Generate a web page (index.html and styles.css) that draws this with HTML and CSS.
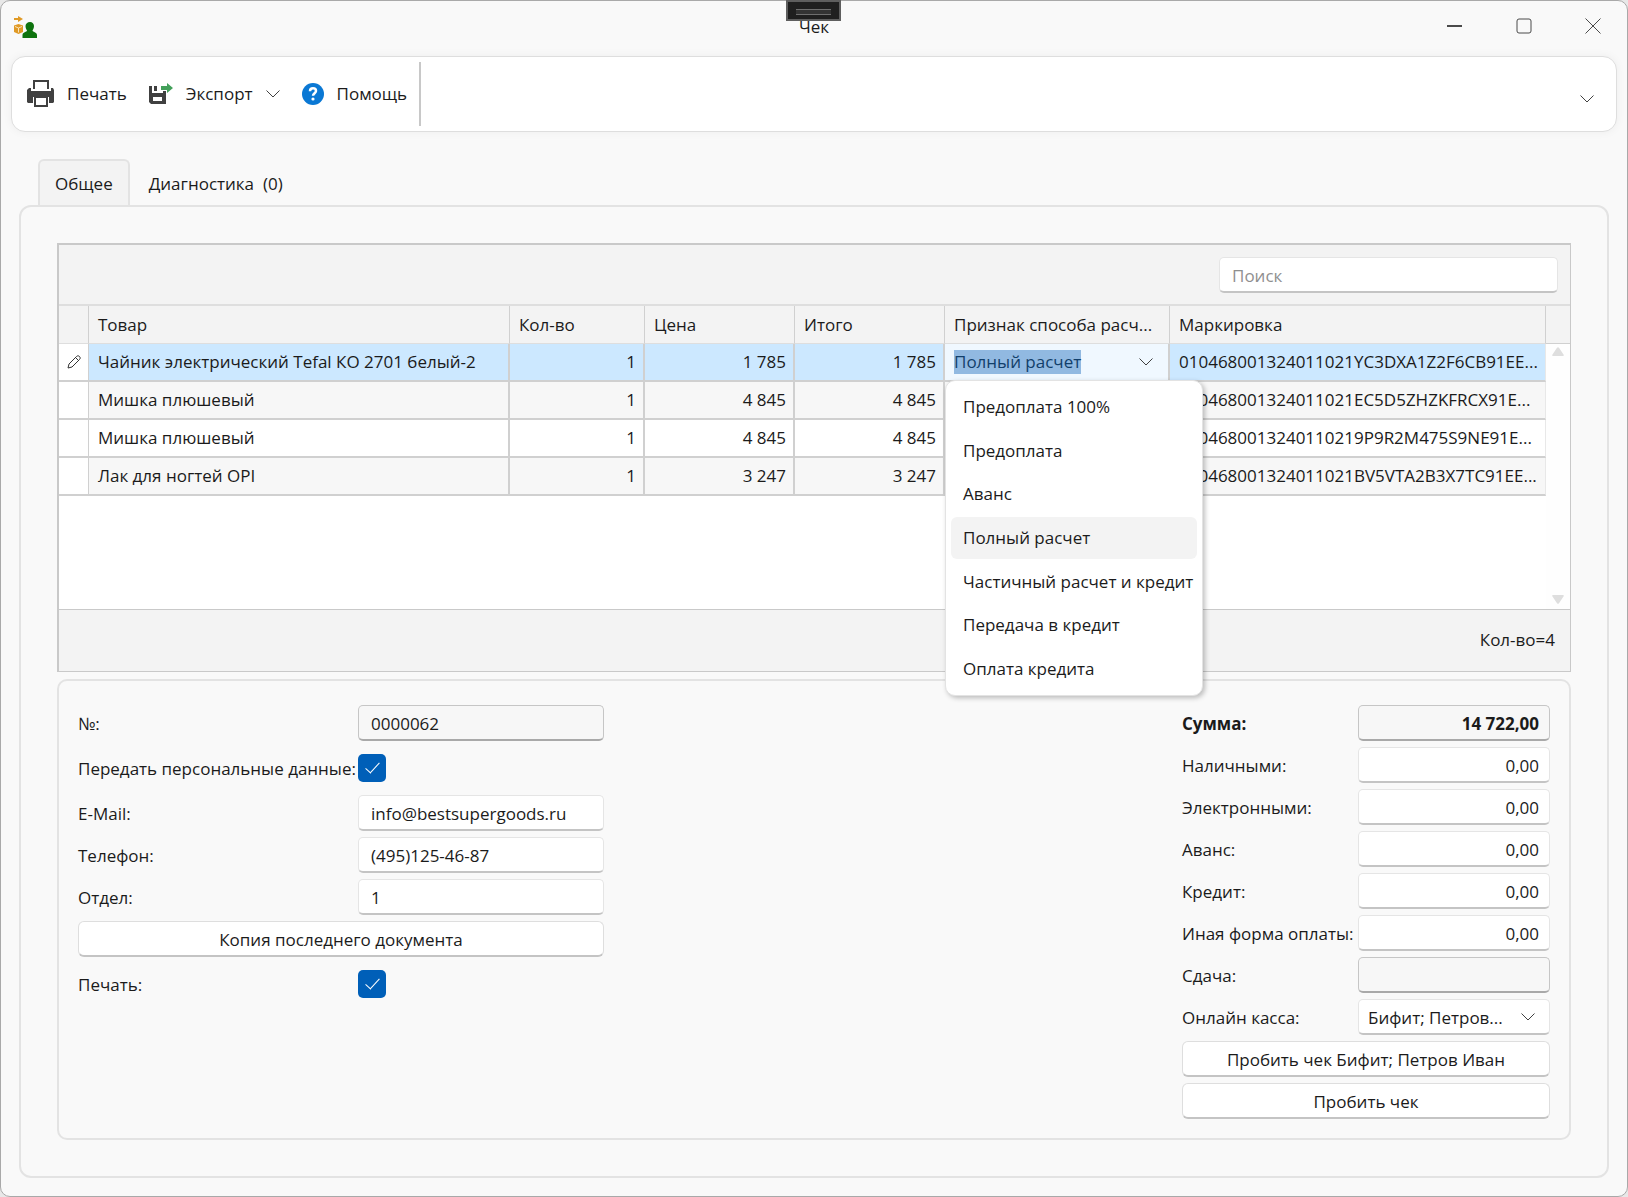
FILE: index.html
```
<!DOCTYPE html>
<html lang="ru">
<head>
    <meta charset="UTF-8">
    <meta name="viewport" content="width=device-width, initial-scale=1.0">
    <title>Чек</title>
    <link rel="stylesheet" href="styles.css">
</head>
<body>
    <div class="window">
        <header class="titlebar">
            <svg class="app-icon" width="24" height="24" viewBox="0 0 24 24">
                <path d="M1 2h4V0l5 3-5 3V4H1z" fill="#e09a26"/>
                <path d="M5.500 8l4.500 1.500v6.500l-4.500 2L1 16V9.500z" fill="#e09a26"/>
                <path d="M2 10.500l3.500 1.500 3.500-1.500M5.500 12v4.500" fill="none" stroke="#fbe3b8"/>
                <path d="M17 6c2.500 0 4 1.800 4 4 0 2-1 3.500-1.500 4.500 0 1.500 4.500 1.500 4.500 4.500v3H9.500v-3c0-3 4.500-3 4.500-4.500-.500-1-1.500-2.500-1.500-4.500 0-2.200 2-4 4.500-4z" fill="#0e730e"/>
            </svg>
            <h1>Чек</h1>
            <div class="drag-handle"></div>
            <div class="window-buttons">
                <button type="button" aria-label="Свернуть">
                    <svg width="16" height="16" viewBox="0 0 16 16"><path d="M0 8h15" stroke-width="2"/></svg>
                </button>
                <button type="button" aria-label="Развернуть">
                    <svg width="16" height="16" viewBox="0 0 16 16"><rect x="1" y="1" width="14" height="14" rx="2"/></svg>
                </button>
                <button type="button" aria-label="Закрыть">
                    <svg width="16" height="16" viewBox="0 0 16 16"><path d="M.500.500l15 15M15.500.500l-15 15"/></svg>
                </button>
            </div>
        </header>

        <nav class="toolbar">
            <button type="button" class="tool">
                <svg width="28" height="28" viewBox="0 0 28 28">
                    <path d="M8 9V1h14v8" fill="#fff" stroke="#404040" stroke-width="2"/>
                    <path d="M1 10l2-2h2v3h20V8h2l1 2v12l-1 1h-4v-6H7v6H2l-1-1z" fill="#404040"/>
                    <path d="M5 12h20v4H5z" fill="#404040"/>
                    <path d="M9 17h12v9H9z" fill="#fff" stroke="#404040" stroke-width="2"/>
                </svg>
                Печать
            </button>
            <button type="button" class="tool">
                <svg width="24" height="24" viewBox="0 0 24 24">
                    <path d="M0 4h3v7h11v-2h3v13H2l-2-2z" fill="#404040"/>
                    <path d="M5 4h3v5H5z" fill="#404040"/>
                    <path d="M4 15h9v4H4z" fill="#fff"/>
                    <path d="M12 4h6V1l6 5-6 5V8h-6z" fill="#43a05a"/>
                </svg>
                Экспорт
                <svg class="chevron" width="14" height="8" viewBox="0 0 14 8"><path d="M.500.500L7 7 13.500.500"/></svg>
            </button>
            <button type="button" class="tool">
                <svg width="22" height="22" viewBox="0 0 22 22">
                    <circle cx="11" cy="11" r="11" fill="#0a78d4"/>
                    <path d="M8 8.200C8 6.300 9.300 5.300 11 5.300s3 1.100 3 2.700c0 2.100-3 2.400-3 4.800" fill="none" stroke="#fff" stroke-width="2.500"/>
                    <circle cx="11" cy="16" r="1.600" fill="#fff"/>
                </svg>
                Помощь
            </button>
            <span class="separator"></span>
            <button type="button" class="tool-more" aria-label="Ещё">
                <svg class="chevron" width="14" height="8" viewBox="0 0 14 8"><path d="M.500.500L7 7 13.500.500"/></svg>
            </button>
        </nav>

        <div class="tabs">
            <a href="#common" class="tab active">Общее</a>
            <a href="#diagnostics" class="tab">Диагностика&nbsp; (0)</a>
        </div>

        <main class="panel" id="common">
            <section class="grid">
                <div class="grid-search">
                    <input type="text" class="field" placeholder="Поиск" aria-label="Поиск">
                </div>
                <div class="grid-body">
                    <table>
                        <colgroup>
                            <col class="col-mark">
                            <col>
                            <col class="col-qty">
                            <col class="col-sum">
                            <col class="col-sum">
                            <col class="col-method">
                            <col class="col-code">
                        </colgroup>
                        <thead>
                            <tr>
                                <th></th>
                                <th>Товар</th>
                                <th>Кол-во</th>
                                <th>Цена</th>
                                <th>Итого</th>
                                <th>Признак способа расч...</th>
                                <th>Маркировка</th>
                            </tr>
                        </thead>
                        <tbody>
                            <tr class="selected">
                                <td class="mark">
                                    <svg width="14" height="14" viewBox="0 0 14 14"><path d="M1 13l1-4 7.500-7.500c1-1 2.300-.800 3 0 .800.800 1 2 0 3L5 12zM8.500 2.500l3 3"/></svg>
                                </td>
                                <td>Чайник электрический Tefal КО 2701 белый-2</td>
                                <td class="num">1</td>
                                <td class="num">1 785</td>
                                <td class="num">1 785</td>
                                <td class="edit">
                                    <div class="combo">
                                        <input type="text" id="method" value="Полный расчет" role="combobox" aria-label="Признак способа расчета" aria-expanded="true" aria-controls="method-list">
                                        <svg class="chevron" width="14" height="8" viewBox="0 0 14 8"><path d="M.500.500L7 7 13.500.500"/></svg>
                                        <ul class="dropdown" id="method-list" role="listbox">
                                            <li role="option">Предоплата 100%</li>
                                            <li role="option">Предоплата</li>
                                            <li role="option">Аванс</li>
                                            <li role="option" class="current" aria-selected="true">Полный расчет</li>
                                            <li role="option">Частичный расчет и кредит</li>
                                            <li role="option">Передача в кредит</li>
                                            <li role="option">Оплата кредита</li>
                                        </ul>
                                    </div>
                                </td>
                                <td>010468001324011021YC3DXA1Z2F6CB91EE...</td>
                            </tr>
                            <tr>
                                <td class="mark"></td>
                                <td>Мишка плюшевый</td>
                                <td class="num">1</td>
                                <td class="num">4 845</td>
                                <td class="num">4 845</td>
                                <td></td>
                                <td>010468001324011021EC5D5ZHZKFRCX91E...</td>
                            </tr>
                            <tr>
                                <td class="mark"></td>
                                <td>Мишка плюшевый</td>
                                <td class="num">1</td>
                                <td class="num">4 845</td>
                                <td class="num">4 845</td>
                                <td></td>
                                <td>0104680013240110219P9R2M475S9NE91E...</td>
                            </tr>
                            <tr>
                                <td class="mark"></td>
                                <td>Лак для ногтей OPI</td>
                                <td class="num">1</td>
                                <td class="num">3 247</td>
                                <td class="num">3 247</td>
                                <td></td>
                                <td>010468001324011021BV5VTA2B3X7TC91EE...</td>
                            </tr>
                        </tbody>
                    </table>
                    <div class="scroll">
                        <div class="scroll-head"></div>
                        <svg width="12" height="9" viewBox="0 0 12 9"><path d="M1 9c-1 0-1-1-.500-1.500L5 .800c.500-.800 1.500-.800 2 0l4.500 6.700c.500.500.500 1.500-.500 1.500z"/></svg>
                        <svg class="down" width="12" height="9" viewBox="0 0 12 9"><path d="M1 0c-1 0-1 1-.500 1.500L5 8.200c.500.800 1.500.800 2 0l4.500-6.700c.500-.500.500-1.500-.500-1.500z"/></svg>
                    </div>
                </div>
                <div class="grid-footer">Кол-во=4</div>
            </section>

            <section class="details">
                <form class="form">
                    <label for="number">№:</label>
                    <input type="text" class="field" id="number" value="0000062" readonly>

                    <label for="personal" class="tall">Передать персональные данные:</label>
                    <input type="checkbox" id="personal" checked>

                    <label for="email">E-Mail:</label>
                    <input type="text" class="field" id="email" value="info@bestsupergoods.ru">

                    <label for="phone">Телефон:</label>
                    <input type="text" class="field" id="phone" value="(495)125-46-87">

                    <label for="department">Отдел:</label>
                    <input type="text" class="field" id="department" value="1">

                    <button type="button" class="button">Копия последнего документа</button>

                    <label for="print" class="tall">Печать:</label>
                    <input type="checkbox" id="print" checked>
                </form>

                <form class="form payment">
                    <label for="total" class="bold">Сумма:</label>
                    <input type="text" class="field bold" id="total" value="14 722,00" readonly>

                    <label for="cash">Наличными:</label>
                    <input type="text" class="field" id="cash" value="0,00">

                    <label for="electronic">Электронными:</label>
                    <input type="text" class="field" id="electronic" value="0,00">

                    <label for="advance">Аванс:</label>
                    <input type="text" class="field" id="advance" value="0,00">

                    <label for="credit">Кредит:</label>
                    <input type="text" class="field" id="credit" value="0,00">

                    <label for="other">Иная форма оплаты:</label>
                    <input type="text" class="field" id="other" value="0,00">

                    <label for="change">Сдача:</label>
                    <input type="text" class="field" id="change" readonly>

                    <label for="register">Онлайн касса:</label>
                    <div class="select">
                        <select class="field" id="register">
                            <option>Бифит; Петров...</option>
                        </select>
                        <svg class="chevron" width="14" height="8" viewBox="0 0 14 8"><path d="M.500.500L7 7 13.500.500"/></svg>
                    </div>

                    <button type="button" class="button">Пробить чек Бифит; Петров Иван</button>
                    <button type="button" class="button">Пробить чек</button>
                </form>
            </section>
        </main>
    </div>
    <script>
        // the edited cell opens with its whole value selected
        const method = document.getElementById("method");
        method.focus();
        method.select();
    </script>
</body>
</html>
```
FILE: styles.css
```
*{
    margin: 0;
    padding: 0;
    box-sizing: border-box;
}
body{
    background-color: #e8e8e8;
    color: #1b1b1b;
    font-family: "Open Sans", "Noto Sans", sans-serif;
    font-size: 17px;
    line-height: 24px;
}
button, input, select{
    font: inherit;
    color: inherit;
}
svg{
    flex-shrink: 0;
}
.window{
    min-height: 100vh;
    display: flex;
    flex-direction: column;
    padding-bottom: 18px;
    background-color: #f9f9f9;
    border: 1px solid #a9a9a9;
    border-radius: 10px;
}
.chevron{
    fill: none;
    stroke: #404040;
}

/* title bar */
.titlebar{
    position: relative;
    height: 55px;
    display: flex;
    justify-content: center;
    padding-top: 14px;
}
.titlebar h1{
    font-size: 17px;
    font-weight: normal;
}
.app-icon{
    position: absolute;
    left: 12px;
    top: 15px;
}
.drag-handle{
    position: absolute;
    left: 50%;
    top: -1px;
    width: 55px;
    height: 21px;
    margin-left: -28px;
    padding: 7px 8px;
    background-color: #1f1f1f;
    border: 2px solid #5e5e5e;
}
.drag-handle::before{
    content: "";
    display: block;
    height: 4px;
    border: 1px solid #6e6e6e;
    border-width: 1px 0;
    background-color: #333;
}
.window-buttons{
    position: absolute;
    right: 0;
    top: 0;
    display: flex;
}
.window-buttons button{
    width: 69px;
    height: 50px;
    display: flex;
    align-items: center;
    justify-content: center;
    border: none;
    background: none;
}
.window-buttons svg{
    fill: none;
    stroke: #4a4a4a;
}

/* toolbar */
.toolbar{
    height: 76px;
    margin: 0 10px;
    padding: 0 14px;
    display: flex;
    align-items: center;
    gap: 22px;
    background-color: #fff;
    border: 1px solid #dedede;
    border-radius: 14px;
    box-shadow: 0 0 10px rgba(0, 0, 0, 0.05);
}
.tool{
    display: flex;
    align-items: center;
    gap: 13px;
    border: none;
    background: none;
}
.separator{
    width: 2px;
    height: 64px;
    margin-left: -10px;
    background-color: #c8c8c8;
}
.tool-more{
    margin-left: auto;
    padding: 6px 8px 0;
    border: none;
    background: none;
}

/* tabs */
.tabs{
    display: flex;
    margin: 27px 37px 0;
}
.tab{
    height: 47px;
    padding: 11px 17px 0;
    border: 2px solid transparent;
    border-bottom: none;
    border-radius: 6px 6px 0 0;
    color: inherit;
    text-decoration: none;
}
.tab.active{
    height: 48px;
    margin-bottom: -1px;
    padding: 11px 15px 0;
    border-color: #e3e3e3;
    background-color: #f3f3f3;
}
.panel{
    flex: 1;
    display: flex;
    flex-direction: column;
    margin: -1px 18px 0;
    padding: 36px;
    border: 2px solid #e3e3e3;
    border-radius: 12px;
}

/* goods grid */
.grid{
    flex: 1;
    display: flex;
    flex-direction: column;
    border: 1px solid #c9c9c9;
    border-width: 2px 1px 1px 2px;
    background-color: #f3f3f3;
}
.grid-search{
    display: flex;
    justify-content: flex-end;
    padding: 12px 12px 11px;
}
.grid-search .field{
    width: 339px;
}
.grid-body{
    flex: 1;
    display: flex;
    align-items: flex-start;
    border-top: 2px solid #dedede;
    border-bottom: 1px solid #c9c9c9;
    background-color: #fff;
}
table{
    flex: 1;
    width: 100%;
    table-layout: fixed;
    border-collapse: separate;
    border-spacing: 0;
}
.col-mark{
    width: 30px;
}
.col-qty{
    width: 135px;
}
.col-sum{
    width: 150px;
}
.col-method{
    width: 225px;
}
.col-code{
    width: 376px;
}
th, td{
    height: 38px;
    padding: 0 7px 0 9px;
    text-align: left;
    white-space: nowrap;
    border-right: 2px solid #d0d0d0;
    border-bottom: 2px solid #d0d0d0;
}
th{
    font-weight: normal;
    background-color: #f3f3f3;
    border-right-width: 1px;
    border-bottom: 1px solid #dedede;
}
tbody tr:nth-child(even) td{
    background-color: #f7f7f7;
}
tbody tr.selected td{
    background-color: #cce8ff;
}
td:last-child{
    border-right: 1px solid #e8e8e8;
}
tbody tr td.mark{
    padding: 0;
    background-color: #fff;
    border-right-width: 1px;
}
.mark svg{
    display: block;
    margin: auto;
    fill: none;
    stroke: #333;
}
td.num{
    text-align: right;
}
tbody tr.selected td.edit{
    padding: 0;
    background-color: #f0f8ff;
}
.combo{
    position: relative;
    display: flex;
    align-items: center;
    height: 36px;
    padding: 0 15px 0 9px;
}
.combo input{
    flex: 1;
    min-width: 0;
    border: none;
    outline: none;
    background: none;
}
.combo input::selection{
    background-color: #91b9e1;
    color: #123f6b;
}
.dropdown{
    position: absolute;
    left: 0;
    top: 36px;
    z-index: 1;
    width: 258px;
    height: 316px;
    padding: 5px;
    display: flex;
    flex-direction: column;
    justify-content: space-between;
    list-style: none;
    background-color: #fff;
    border: 1px solid #e3e3e3;
    border-radius: 10px;
    box-shadow: 2px 2px 5px rgba(0, 0, 0, 0.25);
}
.dropdown li{
    padding: 9px 12px;
    border-radius: 6px;
}
.dropdown .current{
    background-color: #f3f3f3;
}
.scroll{
    align-self: stretch;
    width: 24px;
    display: flex;
    flex-direction: column;
    align-items: center;
    padding-bottom: 5px;
    background-color: #fefefe;
}
.scroll-head{
    width: 100%;
    height: 38px;
    margin-bottom: 3px;
    background-color: #f3f3f3;
    border-bottom: 1px solid #d0d0d0;
}
.scroll svg{
    fill: #dedede;
}
.scroll .down{
    margin-top: auto;
}
.grid-footer{
    height: 61px;
    padding: 18px 15px;
    text-align: right;
}

/* document details */
.details{
    display: flex;
    justify-content: space-between;
    align-items: flex-start;
    margin-top: 7px;
    padding: 24px 19px 19px;
    border: 2px solid #e3e3e3;
    border-radius: 10px;
}
.form{
    display: grid;
    grid-template-columns: 280px 246px;
    row-gap: 6px;
    align-items: center;
}
.payment{
    grid-template-columns: 176px 192px;
}
.payment .field{
    text-align: right;
}
.form label{
    height: 36px;
    padding-top: 7px;
    white-space: nowrap;
}
.form label.tall{
    height: 42px;
    padding-top: 10px;
}
.field{
    width: 100%;
    height: 36px;
    padding: 2px 10px 0 12px;
    background-color: #fff;
    border: 1px solid #e5e5e5;
    border-bottom: 2px solid #c4c4c4;
    border-radius: 5px;
    outline: none;
}
.field::placeholder{
    color: #8f8f8f;
}
.field[readonly]{
    background-color: #f7f7f7;
    border-color: #c6c6c6;
    border-bottom-color: #a9a9a9;
}
.bold{
    font-weight: bold;
}
input[type="checkbox"]{
    appearance: none;
    width: 28px;
    height: 28px;
    display: flex;
    justify-content: center;
    border-radius: 5px;
    background-color: #005fb8;
}
input[type="checkbox"]:checked::before{
    content: "";
    width: 6px;
    height: 13px;
    margin-top: 5px;
    border: solid #fff;
    border-width: 0 1px 1px 0;
    transform: rotate(42deg);
}
.select{
    position: relative;
}
.payment select.field{
    appearance: none;
    display: block;
    padding-left: 9px;
    text-align: left;
}
.select .chevron{
    position: absolute;
    right: 15px;
    top: 14px;
}
.button{
    grid-column: 1 / -1;
    height: 36px;
    padding-top: 2px;
    background-color: #fff;
    border: 1px solid #dedede;
    border-bottom: 2px solid #c4c4c4;
    border-radius: 6px;
}
```
